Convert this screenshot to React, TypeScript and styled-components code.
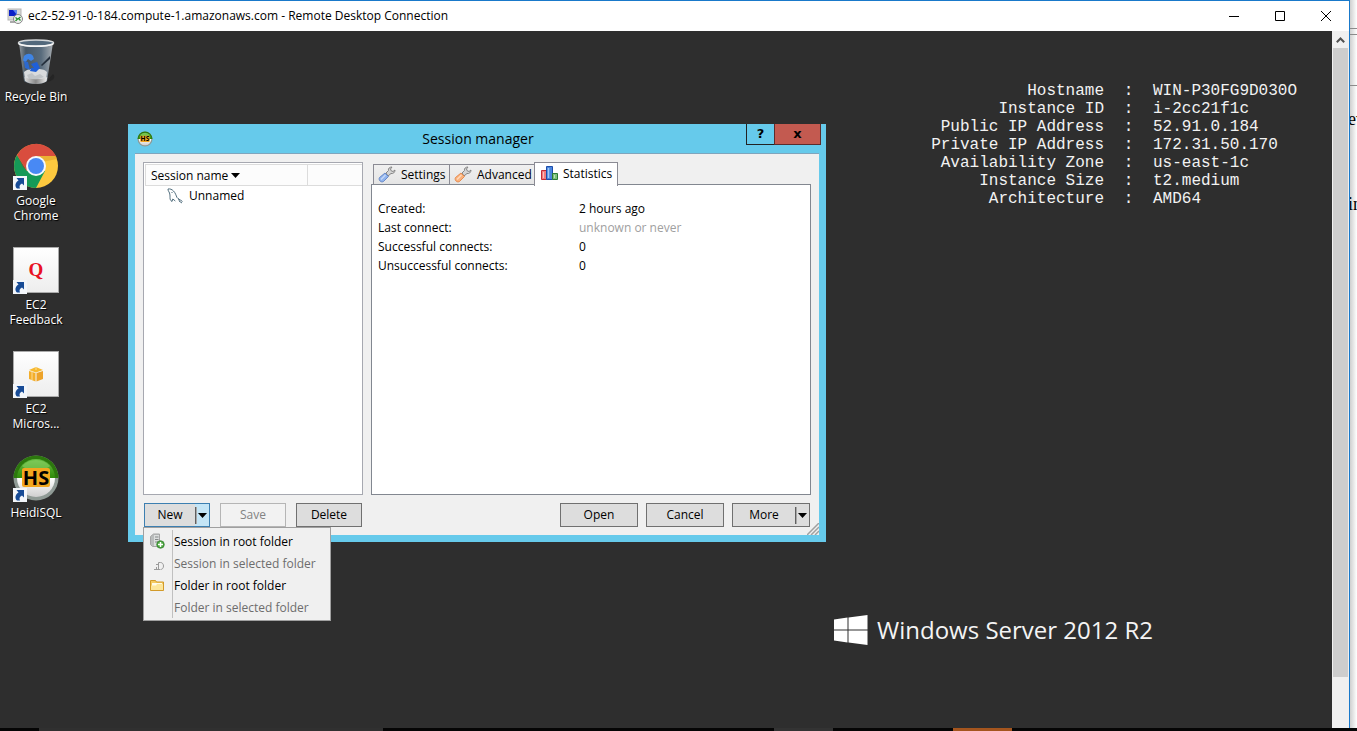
import React from 'react';
import styled, { createGlobalStyle } from 'styled-components';

const GlobalStyle = createGlobalStyle`
  * { box-sizing: border-box; }
  body { margin: 0; font: 12px/15px "Open Sans", "Noto Sans", sans-serif; color: #000; background: #2e2e2e; }
  button { font: inherit; color: inherit; padding: 0; margin: 0; border: 0; background: none; border-radius: 0; }
  svg { display: block; flex: none; }
`;

/* ---------- screen ---------- */

const Screen = styled.div`
  display: flex;
  flex-direction: column;
  min-height: 100vh;
`;

const Workspace = styled.div`
  display: flex;
  flex: 1;
`;

const RemoteWindow = styled.main`
  display: flex;
  flex-direction: column;
  flex: 1;
  min-width: 0;
  border-top: 1px solid #1979ca;
  border-right: 1px solid #1979ca;
`;

const WindowBar = styled.header`
  display: flex;
  align-items: center;
  height: 30px;
  padding-left: 7px;
  background: #fff;
`;

const WindowTitle = styled.h1`
  flex: 1;
  margin: 0;
  padding: 0 0 2px 5px;
  font: inherit;
`;

const CaptionButton = styled.button`
  display: grid;
  place-items: center;
  width: 46px;
  height: 28px;
`;

const WindowBody = styled.div`
  display: flex;
  flex: 1;
`;

const Desktop = styled.section`
  position: relative;
  flex: 1;
  min-width: 0;
  background: #2e2e2e;
`;

const ScrollTrack = styled.div`
  display: flex;
  flex-direction: column;
  width: 17px;
  padding: 0 1px 51px;
  background: #f0f0f0;
`;

const ScrollArrow = styled.button`
  display: grid;
  place-items: center;
  height: 17px;
`;

const ScrollThumb = styled.div`
  flex: 1;
  background: #cdcdcd;
`;

/* ---------- page showing behind the window ---------- */

const Behind = styled.aside`
  width: 7px;
  overflow: hidden;
  background: linear-gradient(to right, #cfcfcf, #fff);
  font: 18px/20px "Liberation Serif", serif;
  white-space: nowrap;
`;

const BehindBar = styled.div<{ $h: number }>`
  height: ${p => p.$h}px;
  border-bottom: 1px solid #8b8b8b;
`;

const BehindText = styled.p<{ $gap: number }>`
  margin: ${p => p.$gap}px 0 0 -2px;
`;

/* ---------- taskbar ---------- */

const Taskbar = styled.footer`
  display: flex;
  height: 3px;
  background: #050505;
`;

const TaskSegment = styled.span<{ $w: number; $color: string }>`
  width: ${p => p.$w}px;
  background: ${p => p.$color};
`;

/* ---------- desktop contents ---------- */

const Shortcuts = styled.nav`
  display: flex;
  flex-direction: column;
  width: 72px;
`;

const Shortcut = styled.a`
  display: flex;
  flex-direction: column;
  align-items: center;
  gap: 3px;
  height: 104px;
  padding-top: 7px;
  color: #fff;
  text-align: center;
  text-decoration: none;
`;

const ShortcutLabel = styled.span`
  text-shadow: 1px 1px 1px #000;
`;

const InstanceInfo = styled.table`
  position: absolute;
  top: 51px;
  right: 29px;
  border-collapse: collapse;
  color: #f2f2f2;
  font: 16px/18px "Liberation Mono", monospace;
`;

const InfoLabel = styled.th`
  padding: 0;
  font-weight: 400;
  text-align: right;
`;

const InfoColon = styled.td`
  width: 49px;
  padding: 0;
  text-align: center;
`;

const InfoValue = styled.td`
  width: 150px;
  padding: 0;
`;

const Brand = styled.div`
  position: absolute;
  right: 179px;
  bottom: 80px;
  display: flex;
  align-items: center;
  gap: 9px;
  color: #f4f4f4;
  font: 24px/36px "Open Sans", sans-serif;
`;

/* ---------- dialog ---------- */

const Dialog = styled.section`
  position: absolute;
  left: 128px;
  top: 93px;
  width: 698px;
  padding: 0 7px 7px;
  background: #66caeb;
`;

const DialogBar = styled.header`
  display: grid;
  grid-template-columns: 1fr auto 1fr;
  height: 29px;
  padding-left: 2px;
  align-items: center;
`;

const DialogTitle = styled.h2`
  margin: 0;
  font-size: 14px;
  line-height: 20px;
  font-weight: 400;
`;

const DialogControls = styled.div`
  display: flex;
  justify-self: end;
  align-self: start;
  margin-right: -2px;
`;

const DialogControl = styled.button<{ $close?: boolean }>`
  width: ${p => (p.$close ? 47 : 28)}px;
  height: 21px;
  border: 1px solid ${p => (p.$close ? '#5c2c2c' : '#222')};
  border-top: 0;
  border-right-width: ${p => (p.$close ? 1 : 0)}px;
  background: ${p => (p.$close ? '#c35a50' : '#66caeb')};
  font: bold 13px/18px "DejaVu Sans", sans-serif;
`;

const Client = styled.div`
  display: flex;
  flex-direction: column;
  gap: 8px;
  padding: 8px;
  border-top: 1px solid #7fa5bd;
  background: #f0f0f0;
`;

const Panes = styled.div`
  display: grid;
  grid-template-columns: 220px 1fr;
  gap: 8px;
  height: 333px;
`;

const SessionTree = styled.div`
  border: 1px solid #a6a8b0;
  background: #fff;
`;

const TreeHead = styled.div`
  display: flex;
  height: 22px;
  margin: 1px 0 0 1px;
  border: 1px solid #dcdcdc;
  border-width: 1px 0 1px 1px;
  background: #fcfcfc;
`;

const TreeSort = styled.button`
  display: flex;
  align-items: center;
  gap: 3px;
  width: 162px;
  padding-left: 5px;
  border-right: 1px solid #dcdcdc;
`;

const TreeRow = styled.div`
  display: flex;
  align-items: center;
  gap: 5px;
  height: 19px;
  padding-left: 23px;
`;

const Tabbed = styled.div`
  display: flex;
  flex-direction: column;
  min-width: 0;
`;

const TabStrip = styled.div`
  display: flex;
  align-items: flex-end;
  height: 22px;
  padding-left: 2px;
`;

const Tab = styled.button<{ $w: number; $active?: boolean }>`
  position: relative;
  display: flex;
  align-items: center;
  gap: 5px;
  width: ${p => p.$w}px;
  height: ${p => (p.$active ? 24 : 20)}px;
  margin-bottom: ${p => (p.$active ? -2 : 0)}px;
  padding: ${p => (p.$active ? '0 0 3px 6px' : '0 0 0 4px')};
  border: 1px solid #8b8b94;
  border-bottom: 0;
  border-right-width: ${p => (p.$active ? 1 : 0)}px;
  background: ${p => (p.$active ? '#fff' : 'linear-gradient(#f0f0f0, #e5e5e5)')};
  white-space: nowrap;
`;

const TabPanel = styled.div`
  flex: 1;
  padding: 14px 6px;
  border: 1px solid #828790;
  background: #fff;
`;

const Stats = styled.table`
  width: 100%;
  border-collapse: collapse;
  line-height: 19px;

  th, td { padding: 0; font-weight: 400; text-align: left; }
  th { width: 201px; }
`;

const StatValue = styled.td<{ $muted?: boolean }>`
  color: ${p => (p.$muted ? '#a0a0a0' : '#000')};
`;

const Actions = styled.div`
  display: flex;
  justify-content: space-between;
  padding: 0 1px;
`;

const ActionGroup = styled.div<{ $gap: number }>`
  display: flex;
  gap: ${p => p.$gap}px;
`;

const ActionButton = styled.button<{ $w: number }>`
  width: ${p => p.$w}px;
  height: 24px;
  padding-bottom: 1px;
  border: 1px solid #707070;
  background: #dddddd;

  &:disabled { border-color: #b5b5b5; background: #f2f2f2; color: #838383; }
`;

const Split = styled.div<{ $w: number; $open?: boolean }>`
  position: relative;
  display: flex;
  width: ${p => p.$w}px;
  height: 24px;
  border: 1px solid ${p => (p.$open ? '#3c7fb1' : '#707070')};
  background: #dddddd;
`;

const SplitMain = styled.button`
  flex: 1;
  padding-bottom: 1px;
`;

const SplitArrow = styled.button<{ $open?: boolean }>`
  display: grid;
  place-items: center;
  width: 14px;
  margin: ${p => (p.$open ? 0 : '2px 0')};
  background: linear-gradient(to right, #606060 1px, #a8a8a8 1px, #a8a8a8 2px, transparent 2px) 0 50% / 100% 17px no-repeat, ${p => (p.$open ? '#c4e5f6' : 'transparent')};
  padding-left: 1px;
`;

const Menu = styled.div`
  position: absolute;
  left: -2px;
  top: 23px;
  z-index: 1;
  width: 188px;
  padding: 2px;
  border: 1px solid #a0a0a0;
  background: linear-gradient(to right, transparent 26px, #c0c0c0 26px, #c0c0c0 27px, transparent 27px) content-box, #f0f0f0;
`;

const MenuItem = styled.button`
  display: grid;
  grid-template-columns: 25px 1fr;
  align-items: center;
  width: 100%;
  height: 22px;
  padding: 0 0 0 3px;
  text-align: left;
  white-space: nowrap;

  &:disabled { color: #6d6d6d; }
`;

/* ---------- drawings ---------- */

const DownArrow = () => (
  <svg width="9" height="5" viewBox="0 0 9 5"><path d="M0 0h9L4.500 5z" /></svg>
);

const RemoteIcon = () => (
  <svg width="16" height="16" viewBox="0 0 16 16">
    <rect x="1" y="1" width="13" height="11" fill="#d8d8d8" stroke="#b5b5b5" />
    <path d="M2 2h8v6H2z" fill="#0b20c8" /><path d="M6 2h4v5z" fill="#5f86ee" />
    <path d="M3 13h5v2H3z" fill="#aaa" />
    <circle cx="11" cy="11" r="4.500" fill="#f0f0f0" stroke="#888" />
    <path d="M8.500 9.500l2 1.500-2 2M13.500 9l-2 1.500 2 2" fill="none" stroke="#23902c" strokeWidth="1.300" />
  </svg>
);

const ShortcutMark = () => (
  <g>
    <path d="M1 34h14v14H1z" fill="#f3f6fa" />
    <path d="M5 46.500c-2.500-2-2-6 1.500-8L4.500 36H12v7.500l-2-2c-2.500 1-3 3-2 5z" fill="#174b96" />
  </g>
);

const BinIcon = () => (
  <svg width="48" height="48" viewBox="0 0 48 48">
    <defs>
      <linearGradient id="bin" x1="0" x2="1"><stop offset="0" stopColor="#9ba3aa" /><stop offset=".2" stopColor="#4b5c6b" /><stop offset=".65" stopColor="#5d7285" /><stop offset="1" stopColor="#b5bbc0" /></linearGradient>
      <linearGradient id="binFoot" x1="0" x2="1"><stop offset="0" stopColor="#ddd" /><stop offset=".5" stopColor="#888" /><stop offset="1" stopColor="#eee" /></linearGradient>
    </defs>
    <path d="M34 44l7-8c3 3 1 7-7 8z" fill="#1c1c1c" opacity=".5" />
    <path d="M7 5l5 38c4 4 19 4 23 0l6-38z" fill="url(#bin)" opacity=".9" />
    <path d="M12 34c4-4 9-3 12-3 5 0 8 0 11 3l-1 8H13z" fill="#d9dbdd" />
    <path d="M15 37l5-2 3 3 5-2 4 3-6 2h-9z" fill="#c0c4c7" />
    <path d="M12.500 39l.5 4c4 4 18 4 21.500 0l.7-4c-5 3-18 3-22.700 0z" fill="url(#binFoot)" />
    <path d="M12 18c3-3 7-3 9 0l1 3-3 2-3-2-3 4-2-3z" fill="#3f84e4" />
    <path d="M12 23l4 1 2 8-5-2z" fill="#2b68ce" />
    <path d="M19 26l6-2 3 6-4 4-6-1 1-3h3z" fill="#1f5fd8" />
    <path d="M29 27l9-9v3l-8 7z" fill="#222d3a" />
    <ellipse cx="24" cy="5" rx="17.500" ry="3" fill="#53697c" stroke="#d5d8da" strokeWidth="1.500" />
    <path d="M7 6c7 3 27 3 34 0" fill="none" stroke="#f6f6f6" strokeWidth="1.500" />
  </svg>
);

const ChromeIcon = () => (
  <svg width="48" height="48" viewBox="0 0 48 48">
    <circle cx="24" cy="24" r="22" fill="#fdc93f" />
    <path d="M33 29L24 46A22 22 0 0 1 5 13L15 29l9-1z" fill="#159957" />
    <path d="M5 13A22 22 0 0 1 44 14H24L15 29z" fill="#d94d3e" />
    <path d="M24 14h20l1 3-15 3z" fill="#e0a42d" opacity=".6" />
    <path d="M5 13l10 16-4-4z" fill="#a93227" opacity=".6" />
    <circle cx="24" cy="24" r="10" fill="#f5f8fd" /><circle cx="24" cy="24" r="8" fill="#4889f4" />
    <ShortcutMark />
  </svg>
);

const TileIcon = ({ children, id }: { children: React.ReactNode; id: string }) => (
  <svg width="48" height="48" viewBox="0 0 48 48">
    <defs><linearGradient id={id} x2="0" y2="1"><stop stopColor="#fff" /><stop offset="1" stopColor="#ededed" /></linearGradient></defs>
    <rect x="1.500" y="1.500" width="45" height="45" fill={`url(#${id})`} stroke="#aaa" />
    {children}
    <ShortcutMark />
  </svg>
);

const HeidiArt = ({ id }: { id: string }) => (
  <>
    <defs>
      <linearGradient id={`${id}g`} x2="0" y2="1"><stop stopColor="#66bb43" /><stop offset="1" stopColor="#2f8c09" /></linearGradient>
      <linearGradient id={`${id}w`} x2="0" y2="1"><stop stopColor="#fff" /><stop offset="1" stopColor="#cfcfcf" /></linearGradient>
    </defs>
    <circle cx="24" cy="24" r="22.500" fill="#8f9a95" />
    <path d="M1.500 24a22.500 22.500 0 0 1 45 0z" fill="#2c780d" />
    <path d="M5 24a19 19 0 0 1 38 0z" fill={`url(#${id}g)`} />
    <path d="M5 24a19 19 0 0 0 38 0z" fill={`url(#${id}w)`} />
    <path d="M10 12a18 16 0 0 1 28 0c-5 5-22 6-28 0z" fill="#9bdc74" opacity=".45" />
    <rect x="10" y="14" width="28" height="19" rx="2" fill="#f2a71f" />
    <text x="24" y="31" textAnchor="middle" fontFamily="Open Sans" fontWeight="700" fontSize="20">HS</text>
  </>
);

const HeidiIcon = () => (
  <svg width="48" height="48" viewBox="0 0 48 48"><HeidiArt id="big" /><ShortcutMark /></svg>
);

const SmallHeidiIcon = () => (
  <svg width="16" height="16" viewBox="0 0 48 48"><HeidiArt id="small" /></svg>
);

const DolphinIcon = () => (
  <svg width="17" height="16" viewBox="0 0 17 16" fill="none" stroke="#4f6c7c">
    <path d="M1 1c2-.5 4 .5 5.500 2 2 2 2.500 4.500 3.500 6.500 1 1.500 3 2 5.500 4M1 1c0 2 1 2.500 1.500 4S3 7.500 3 9.500c0 2 .5 3 2 4l.8-2.500c1 .5 1.500 1.500 2.500 2M11 11c1.500 0 1.500 1 1 2l3 2" />
    <path d="M5 4v1" />
  </svg>
);

const WrenchIcon = ({ color, dark }: { color: string; dark: string }) => (
  <svg width="18" height="17" viewBox="0 0 18 17">
    <path d="M8 7l2.500-2.500C10 2.500 11.500 1 14 1l-1.500 2 .7 1.800 1.800.7L17 4c0 2.500-2 4-4 3.500L10 10z" fill="#d4d4d4" stroke="#858585" />
    <path d="M7 7l3.500 3.500-5 5c-2.500 1.500-5.500-1.500-4-4z" fill={color} stroke={dark} strokeWidth=".8" />
    <path d="M7.500 9L3 13.500" stroke="#fff" opacity=".5" strokeWidth="1.500" />
  </svg>
);

const ChartIcon = () => (
  <svg width="17" height="15" viewBox="0 0 17 15">
    <path d="M.5 4.500h5v9h-5z" fill="#f47b7b" stroke="#c42b36" />
    <path d="M5.500.5h6v13h-6z" fill="#4a86dd" stroke="#1c4cab" /><path d="M7.500 2v10" stroke="#a2c8f7" strokeWidth="1.500" />
    <path d="M11.500 7.500h5v6h-5z" fill="#7ac279" stroke="#2a7a35" /><path d="M2.500 6v6M13.500 9v3" stroke="#fff" opacity=".5" />
  </svg>
);

const ServerAddIcon = () => (
  <svg width="16" height="16" viewBox="0 0 16 16">
    <path d="M1.500 3.500l3-2.500h6v12.500h-7l-2-2z" fill="#b9bcbc" stroke="#a5a5a5" />
    <path d="M5 2h5v11H5z" fill="#dcdede" /><path d="M6 4h3.500M6 6.500h3.500M6 9h3" stroke="#858989" />
    <circle cx="11.500" cy="11.500" r="3.800" fill="#47a63a" stroke="#3a7a35" strokeWidth=".7" /><path d="M11.500 9v5M9 11.500h5" stroke="#fff" strokeWidth="1.500" />
  </svg>
);

const PlugIcon = () => (
  <svg width="16" height="16" viewBox="0 0 16 16" fill="none" stroke="#9a9a9a">
    <path d="M7 9.500h3M5 14.500h6M9.500 7.500h2c4 0 4 7 0 7M9.500 7.500v7M7.500 12v2" />
  </svg>
);

const FolderIcon = () => (
  <svg width="16" height="16" viewBox="0 0 16 16">
    <path d="M1.500 3.500h5l1 1.500h7v8.500h-13z" fill="#f5cb60" stroke="#d29a2a" />
    <path d="M3 6h10v3H3z" fill="#fffbe8" /><path d="M2 8.500h5l1-1.500h6v6H2z" fill="#fde69a" />
  </svg>
);

const CubeIcon = () => (
  <g>
    <path d="M17 20l7-3 7 3-7 2.500z" fill="#f7b92f" /><path d="M17 21l6.500 2v8.500L17 29z" fill="#f3ae2b" />
    <path d="M31 21l-6.500 2v8.500L31 29z" fill="#eda32a" /><path d="M24 17v3M20 21v9" stroke="#fbdc97" />
  </g>
);

const WindowsLogo = () => (
  <svg width="34" height="30" viewBox="0 0 34 30" fill="#fff">
    <path d="M0 4.500l13.500-2v12H0zM14.500 2.400L33.500 0v14.500h-19zM0 15.500h13.500v12L0 25.500zM14.500 15.500h19V30l-19-2.400z" />
  </svg>
);

const Grip = () => (
  <svg width="12" height="12" viewBox="0 0 12 12" stroke="#a0a0a0"><path d="M0 12L12 0M4 12l8-8M8 12l4-4" strokeWidth="1.500" /></svg>
);

const GripCorner = styled.div`
  position: absolute;
  right: 7px;
  bottom: 7px;
`;

/* ---------- data ---------- */

const instance = [
  ['Hostname', 'WIN-P30FG9D030O'],
  ['Instance ID', 'i-2cc21f1c'],
  ['Public IP Address', '52.91.0.184'],
  ['Private IP Address', '172.31.50.170'],
  ['Availability Zone', 'us-east-1c'],
  ['Instance Size', 't2.medium'],
  ['Architecture', 'AMD64'],
];

const stats = [
  { label: 'Created:', value: '2 hours ago' },
  { label: 'Last connect:', value: 'unknown or never', muted: true },
  { label: 'Successful connects:', value: '0' },
  { label: 'Unsuccessful connects:', value: '0' },
];

const shortcuts = [
  { icon: <BinIcon />, lines: ['Recycle Bin'] },
  { icon: <ChromeIcon />, lines: ['Google', 'Chrome'] },
  {
    icon: (
      <TileIcon id="tileQ">
        <text x="24" y="30" textAnchor="middle" fontFamily="Liberation Serif" fontWeight="700" fontSize="19" fill="#e81123">Q</text>
      </TileIcon>
    ),
    lines: ['EC2', 'Feedback'],
  },
  { icon: <TileIcon id="tileCube"><CubeIcon /></TileIcon>, lines: ['EC2', 'Micros...'] },
  { icon: <HeidiIcon />, lines: ['HeidiSQL'] },
];

const segments = [
  { w: 39, color: '#050505' },
  { w: 344, color: '#303030' },
  { w: 391, color: '#050505' },
  { w: 59, color: '#333' },
  { w: 120, color: '#050505' },
  { w: 59, color: '#a4551e' },
];

export default function App() {
  return (
    <Screen>
      <GlobalStyle />
      <Workspace>
        <RemoteWindow>
          <WindowBar>
            <RemoteIcon />
            <WindowTitle>ec2-52-91-0-184.compute-1.amazonaws.com - Remote Desktop Connection</WindowTitle>
            <CaptionButton aria-label="Minimize"><svg width="10" height="10" stroke="#000"><path d="M0 5.500h10" /></svg></CaptionButton>
            <CaptionButton aria-label="Maximize"><svg width="10" height="10" stroke="#000" fill="none"><path d="M.5.5h9v9h-9z" /></svg></CaptionButton>
            <CaptionButton aria-label="Close"><svg width="10" height="10" stroke="#000"><path d="M0 0l10 10M10 0L0 10" /></svg></CaptionButton>
          </WindowBar>
          <WindowBody>
            <Desktop>
              <Shortcuts>
                {shortcuts.map(s => (
                  <Shortcut href="#" key={s.lines.join(' ')}>
                    {s.icon}
                    <ShortcutLabel>{s.lines.map((l, i) => <React.Fragment key={l}>{i > 0 && <br />}{l}</React.Fragment>)}</ShortcutLabel>
                  </Shortcut>
                ))}
              </Shortcuts>

              <InstanceInfo>
                <tbody>
                  {instance.map(([label, value]) => (
                    <tr key={label}>
                      <InfoLabel scope="row">{label}</InfoLabel>
                      <InfoColon>:</InfoColon>
                      <InfoValue>{value}</InfoValue>
                    </tr>
                  ))}
                </tbody>
              </InstanceInfo>

              <Brand><WindowsLogo /><span>Windows Server 2012 R2</span></Brand>

              <Dialog role="dialog" aria-labelledby="dialog-title">
                <DialogBar>
                  <SmallHeidiIcon />
                  <DialogTitle id="dialog-title">Session manager</DialogTitle>
                  <DialogControls>
                    <DialogControl aria-label="Help">?</DialogControl>
                    <DialogControl aria-label="Close" $close>x</DialogControl>
                  </DialogControls>
                </DialogBar>
                <Client>
                  <Panes>
                    <SessionTree>
                      <TreeHead><TreeSort>Session name <DownArrow /></TreeSort></TreeHead>
                      <TreeRow><DolphinIcon />Unnamed</TreeRow>
                    </SessionTree>
                    <Tabbed>
                      <TabStrip role="tablist">
                        <Tab role="tab" $w={76}><WrenchIcon color="#8fb3ee" dark="#5679bd" />Settings</Tab>
                        <Tab role="tab" $w={85}><WrenchIcon color="#fbb27c" dark="#df7c3b" />Advanced</Tab>
                        <Tab role="tab" aria-selected $w={84} $active><ChartIcon />Statistics</Tab>
                      </TabStrip>
                      <TabPanel role="tabpanel">
                        <Stats>
                          <tbody>
                            {stats.map(s => (
                              <tr key={s.label}><th scope="row">{s.label}</th><StatValue $muted={s.muted}>{s.value}</StatValue></tr>
                            ))}
                          </tbody>
                        </Stats>
                      </TabPanel>
                    </Tabbed>
                  </Panes>
                  <Actions>
                    <ActionGroup $gap={10}>
                      <Split $w={66} $open>
                        <SplitMain>New</SplitMain>
                        <SplitArrow $open aria-label="New options" aria-expanded><DownArrow /></SplitArrow>
                        <Menu role="menu">
                          <MenuItem role="menuitem"><ServerAddIcon />Session in root folder</MenuItem>
                          <MenuItem role="menuitem" disabled><PlugIcon />Session in selected folder</MenuItem>
                          <MenuItem role="menuitem"><FolderIcon />Folder in root folder</MenuItem>
                          <MenuItem role="menuitem" disabled><span />Folder in selected folder</MenuItem>
                        </Menu>
                      </Split>
                      <ActionButton $w={66} disabled>Save</ActionButton>
                      <ActionButton $w={66}>Delete</ActionButton>
                    </ActionGroup>
                    <ActionGroup $gap={8}>
                      <ActionButton $w={78}>Open</ActionButton>
                      <ActionButton $w={78}>Cancel</ActionButton>
                      <Split $w={78}>
                        <SplitMain>More</SplitMain>
                        <SplitArrow aria-label="More options"><DownArrow /></SplitArrow>
                      </Split>
                    </ActionGroup>
                  </Actions>
                </Client>
                <GripCorner><Grip /></GripCorner>
              </Dialog>
            </Desktop>
            <ScrollTrack>
              <ScrollArrow aria-label="Scroll up">
                <svg width="9" height="6" fill="none" stroke="#505050" strokeWidth="2"><path d="M.8 5.200l3.700-3.700 3.700 3.700" /></svg>
              </ScrollArrow>
              <ScrollThumb />
            </ScrollTrack>
          </WindowBody>
        </RemoteWindow>
        <Behind>
          <BehindBar $h={29} />
          <BehindBar $h={6} />
          <BehindBar $h={51} />
          <BehindText $gap={23}>ev</BehindText>
          <BehindText $gap={65}>in</BehindText>
        </Behind>
      </Workspace>
      <Taskbar>
        {segments.map((s, i) => <TaskSegment key={i} $w={s.w} $color={s.color} />)}
      </Taskbar>
    </Screen>
  );
}
